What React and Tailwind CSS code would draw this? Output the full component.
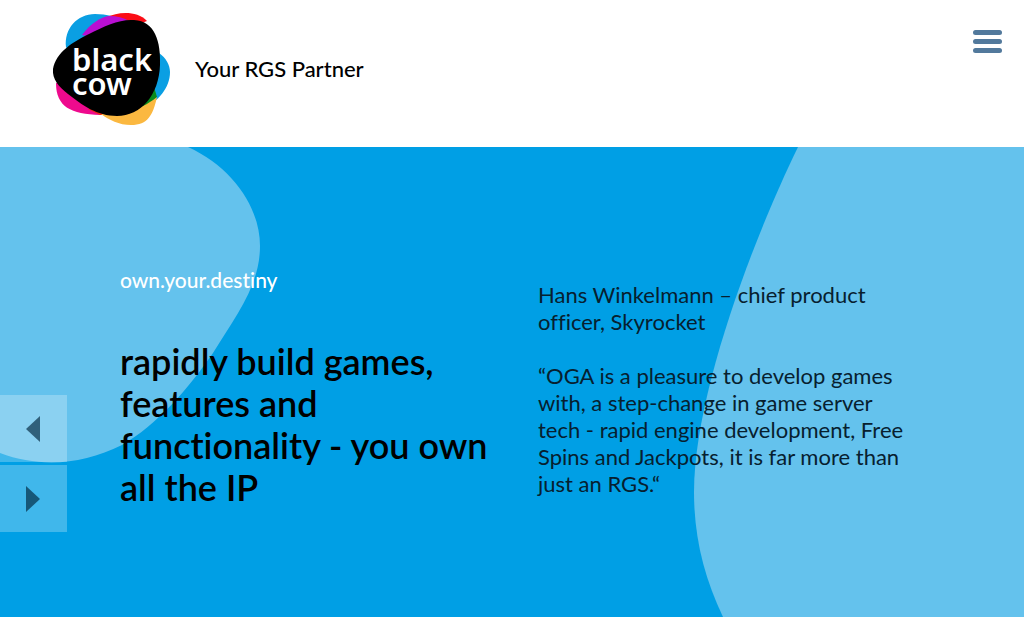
function Logo() {
  return (
    <svg viewBox="0 0 120 116" className="h-29 w-30 shrink-0" role="img" aria-label="black cow">
      <path d="M15 36 C13 18 26 3 44 3 C56 3 66 6 74 10 L108 42 C115 47 119 54 119 61 C119 77 107 91 92 97 L50 90 Z" fill="#0a9fe3" />
      <path d="M56 6 C66 1 86 -1 96 10 L70 20 Z" fill="#fb0d16" />
      <path d="M31 24 C40 12 50 6 58 5 Q70 5 78 10 L50 28 Z" fill="#b90fd2" />
      <path d="M5 72 C5 96 20 103 49 104 L60 90 L20 70 Z" fill="#ee0a8d" />
      <path d="M37 98 L49 104 L68 104 L60 90 Z" fill="#ef2a17" />
      <path d="M103 76 L106 86 Q99 95 87 99 L84 96 Z" fill="#0a8a1c" />
      <path d="M50 103 C70 103 87 101 106 86 C102 104 97 114 80 114 C68 114 58 109 50 103 Z" fill="#fbb840" />
      <path d="M2 58 C5 41 22 31 38 23 C54 15 68 8 83 9 C104 10 110 31 109 54 C108 84 90 105 66 105 C46 105 31 94 17 83 C8 76 1 68 2 58 Z" fill="#000" />
      <text x="21" y="60" fontSize="31" fontWeight="600" fill="#fff" fontFamily="'Noto Sans', sans-serif">black</text>
      <text x="21" y="84" fontSize="31" fontWeight="600" fill="#fff" fontFamily="'Noto Sans', sans-serif">cow</text>
    </svg>
  );
}

function Blobs() {
  return (
    <>
      <svg viewBox="0 0 260 320" className="absolute left-0 top-0 h-80 w-65" aria-hidden="true">
        <path d="M0 0H188C232 20 260 60 260 99C260 139 235 170 213 206C188 242 157 278 122 298C82 318 40 321 0 306Z" fill="#64c2ed" />
      </svg>
      <svg viewBox="0 0 330 470" preserveAspectRatio="none" className="absolute right-0 top-0 h-full w-[330px]" aria-hidden="true">
        <path d="M104 0C62 86 0 245 0 345C0 390 10 430 29 470H330V0Z" fill="#64c2ed" />
      </svg>
    </>
  );
}

function SlideButton({ label, points }) {
  return (
    <button type="button" aria-label={label} className="flex h-[67px] w-[67px] items-center justify-center bg-white/25 pr-0.5">
      <svg viewBox="0 0 14 26" className="h-[26px] w-3.5" aria-hidden="true">
        <polygon points={points} fill="#00243a" fillOpacity="0.65" />
      </svg>
    </button>
  );
}

export default function App() {
  return (
    <div className="flex min-h-screen flex-col bg-white font-['Lato',sans-serif] text-black [font-variant-ligatures:none]">
      <header className="flex h-[147px] items-start justify-between pl-[51px] pr-[22px]">
        <a href="#home" className="flex items-center gap-6 pt-[11px]">
          <Logo />
          <span className="text-[22px] font-medium leading-7">Your RGS Partner</span>
        </a>
        <button type="button" aria-label="Open menu" className="mt-[30px] flex flex-col gap-1">
          <span className="h-[5px] w-[29px] rounded-sm bg-[#52799c]" />
          <span className="h-[5px] w-[29px] rounded-sm bg-[#52799c]" />
          <span className="h-[5px] w-[29px] rounded-sm bg-[#52799c]" />
        </button>
      </header>
      <main className="relative flex grow bg-[#009fe5]">
        <Blobs />
        <nav aria-label="Slides" className="absolute left-0 top-[248px] flex flex-col gap-[3px]">
          <SlideButton label="Previous slide" points="14,0 14,26 0,13" />
          <SlideButton label="Next slide" points="0,0 0,26 14,13" />
        </nav>
        <div className="pointer-events-none relative mx-30 grid grow grid-cols-[378px_1fr] gap-10">
          <section className="whitespace-nowrap pt-[119px]">
            <p className="text-[21px] font-medium leading-7 text-white">own.your.destiny</p>
            <h1 className="mt-[46px] text-[36px] font-semibold leading-[42px]">
              rapidly build games,
              <br />
              features and
              <br />
              functionality - you own
              <br />
              all the IP
            </h1>
          </section>
          <section className="whitespace-nowrap pt-[134px] text-[22px] leading-[27px] text-[#07202f]">
            <p>
              Hans Winkelmann – chief product
              <br />
              officer, Skyrocket
            </p>
            <p className="mt-[27px]">
              “OGA is a pleasure to develop games
              <br />
              with, a step-change in game server
              <br />
              tech - rapid engine development, Free
              <br />
              Spins and Jackpots, it is far more than
              <br />
              just an RGS.“
            </p>
          </section>
        </div>
      </main>
    </div>
  );
}
